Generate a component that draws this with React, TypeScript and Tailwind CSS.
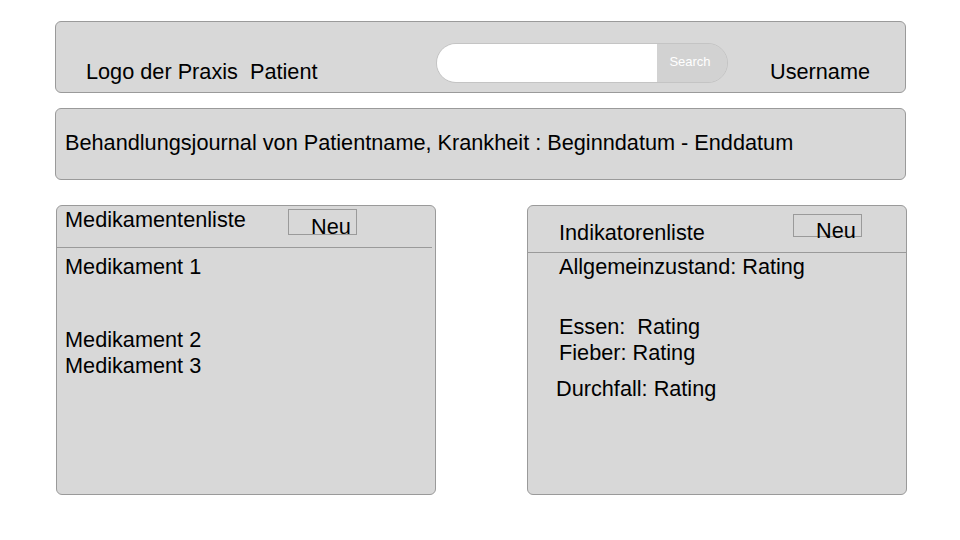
const font = { fontFamily: '"Liberation Sans", Arial, sans-serif' };

function NeuButton({ h, pt }: { h: string; pt: string }) {
  return (
    <div className={`w-[69px] ${h} border border-[#9a9a9a] pl-[22px] ${pt} leading-[24px] whitespace-nowrap`}>
      Neu
    </div>
  );
}

function App() {
  return (
    <div className="w-[960px] h-[540px] bg-white text-black text-[21.7px] leading-[24px] overflow-hidden" style={font}>
      {/* header */}
      <div className="mt-[21px] ml-[55px] w-[851px] h-[72px] rounded-[6px] border border-[#9a9a9a] bg-[#d8d8d8] flex items-start">
        <div className="w-[380px] shrink-0 pl-[30px] pt-[38px] whitespace-pre">Logo der Praxis  Patient</div>
        <div className="mt-[21px] w-[292px] h-[40px] shrink-0 flex rounded-full border border-[#c4c4c4] overflow-hidden">
          <div className="w-[220px] bg-white" />
          <div className="flex-1 bg-[#d2d2d2] text-white text-[13px] leading-[16px] flex items-center justify-center pb-[3px] pr-[4px]">
            Search
          </div>
        </div>
        <div className="ml-[42px] pt-[38px]">Username</div>
      </div>

      {/* title bar */}
      <div className="mt-[15px] ml-[55px] w-[851px] h-[72px] rounded-[6px] border border-[#9a9a9a] bg-[#d8d8d8] pl-[9px] pt-[22px]">
        Behandlungsjournal von Patientname, Krankheit : Beginndatum - Enddatum
      </div>

      <div className="mt-[25px] flex">
        {/* Medikamentenliste */}
        <div className="ml-[56px] w-[380px] h-[290px] rounded-[6px] border border-[#9a9a9a] bg-[#d8d8d8]">
          <div className="h-[41px] flex items-start">
            <div className="w-[231px] pl-[8px] pt-[2px]">Medikamentenliste</div>
            <div className="mt-[3px]">
              <NeuButton h="h-[26px]" pt="pt-[5px]" />
            </div>
          </div>
          <div className="mr-[3px] h-px bg-[#9a9a9a]" />
          <div className="pl-[8px]">
            <div className="mt-[7px]">Medikament 1</div>
            <div className="mt-[49px]">Medikament 2</div>
            <div className="mt-[2px]">Medikament 3</div>
          </div>
        </div>

        {/* Indikatorenliste */}
        <div className="ml-[91px] w-[380px] h-[290px] rounded-[6px] border border-[#9a9a9a] bg-[#d8d8d8]">
          <div className="h-[46px] flex items-start">
            <div className="w-[265px] pl-[31px] pt-[15px]">Indikatorenliste</div>
            <div className="mt-[8px]">
              <NeuButton h="h-[23px]" pt="pt-[4px]" />
            </div>
          </div>
          <div className="h-px bg-[#9a9a9a]" />
          <div className="pl-[31px]">
            <div className="mt-[2px]">Allgemeinzustand: Rating</div>
            <div className="mt-[36px] whitespace-pre">Essen:  Rating</div>
            <div className="mt-[2px]">Fieber: Rating</div>
            <div className="mt-[12px] -ml-[3px]">Durchfall: Rating</div>
          </div>
        </div>
      </div>
    </div>
  );
}

export default App;
